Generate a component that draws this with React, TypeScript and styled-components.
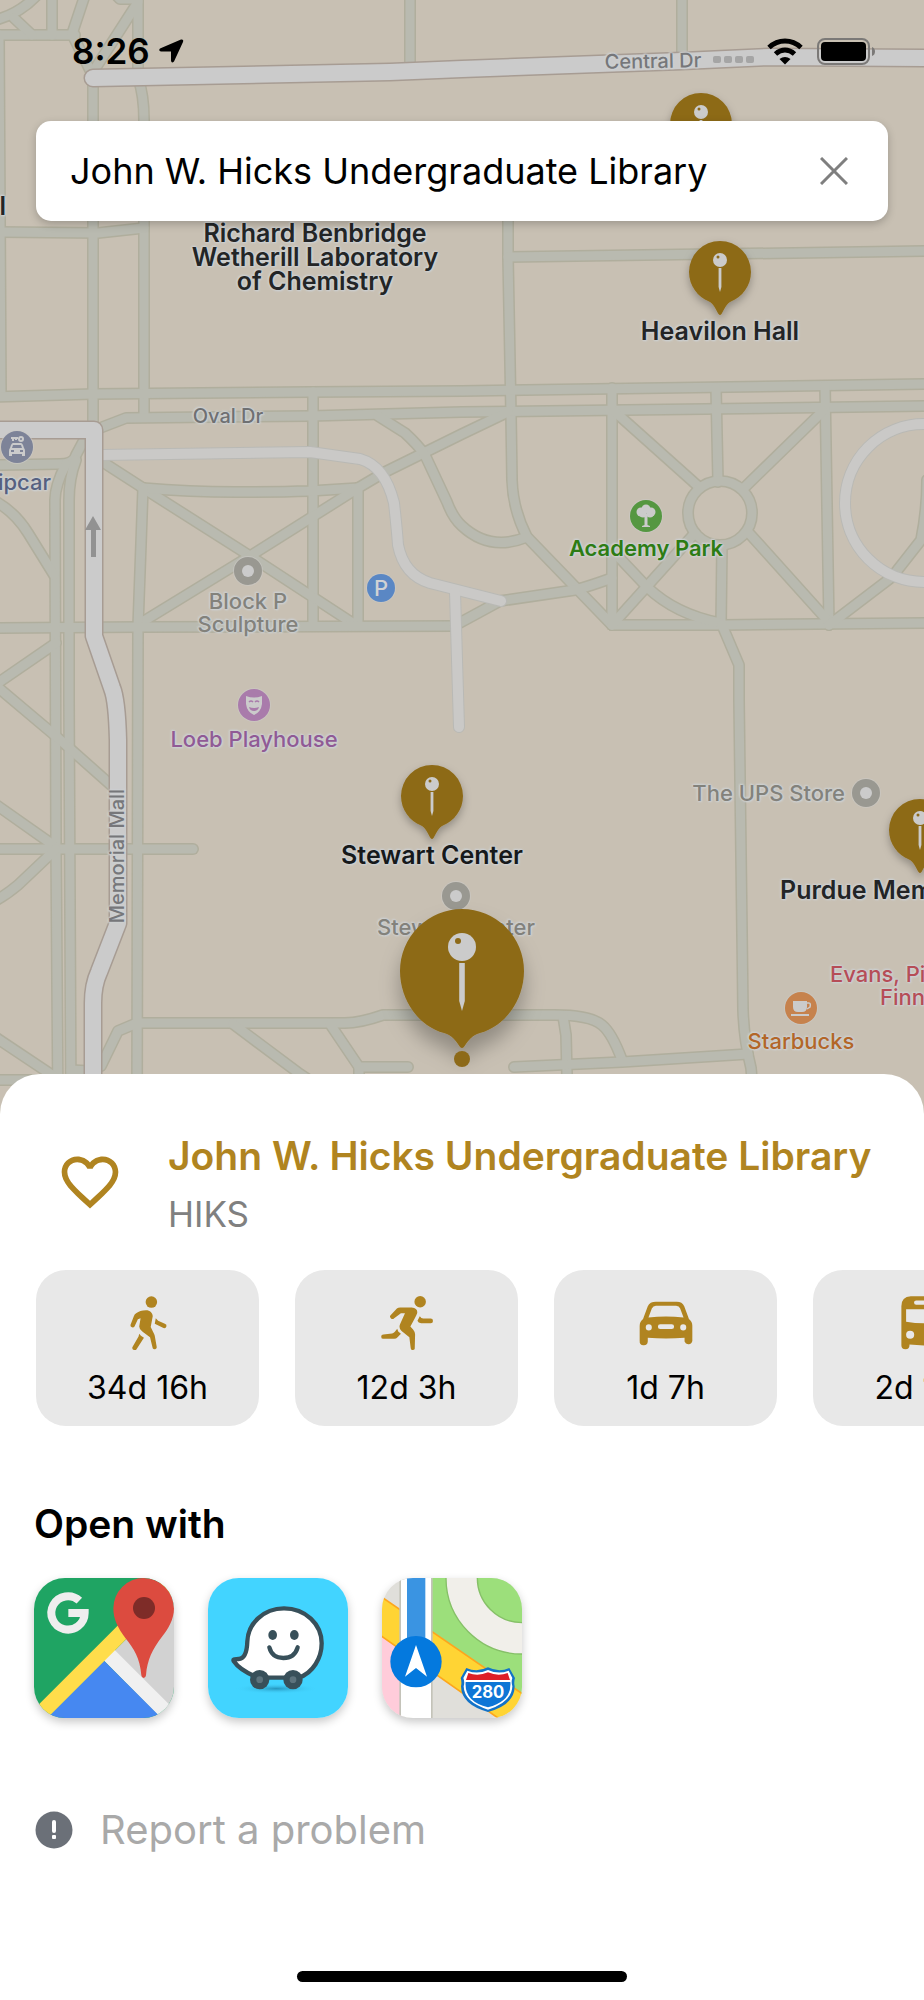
import React, { useState } from "react";
import styled, { createGlobalStyle, css } from "styled-components";
import { MdFavoriteBorder } from "react-icons/md";

const GlobalStyle = createGlobalStyle`
  *, *::before, *::after { box-sizing: border-box; }
  body {
    margin: 0;
    background: #fff;
    font-family: Inter, "Liberation Sans", sans-serif;
    color: #000;
  }
  button { font: inherit; color: inherit; border: 0; padding: 0; background: none; cursor: pointer; }
`;

const MAP_W = 924;
const MAP_H = 1114;
const gold = "#b08420";

const Screen = styled.div`
  position: relative;
  min-height: 100vh;
  display: flex;
  flex-direction: column;
  overflow: hidden;
`;

/* ---------- map ---------- */

const MapCanvas = styled.div`
  position: relative;
  width: 100%;
  aspect-ratio: ${MAP_W} / ${MAP_H};
  overflow: hidden;
  background: #c8c0b3;
`;

const MapDrawing = styled.svg`
  display: block;
  width: 100%;
  height: 100%;
`;

const PinLayer = styled.svg`
  position: absolute;
  inset: 0;
  width: 100%;
  height: 100%;
`;

type Anchor = "center" | "start" | "end";

const anchorShift: Record<Anchor, string> = { center: "-50%", start: "0", end: "-100%" };

const labelKinds = {
  building: css`font-size: 25px; line-height: 24px; font-weight: 600;`,
  park: css`font-size: 22px; line-height: 24px; font-weight: 600;`,
  place: css`font-size: 22px; line-height: 23px; font-weight: 500;`,
  street: css`font-size: 20px; line-height: 24px; font-weight: 500;`,
  glyph: css`font-size: 22px; line-height: 24px; font-weight: 500; text-shadow: none;`,
};

const MapLabel = styled.span<{
  $x: number;
  $y: number;
  $color: string;
  $kind?: keyof typeof labelKinds;
  $anchor?: Anchor;
  $angle?: number;
}>`
  position: absolute;
  left: ${(p) => (p.$x / MAP_W) * 100}%;
  top: ${(p) => (p.$y / MAP_H) * 100}%;
  transform: translate(${(p) => anchorShift[p.$anchor ?? "center"]}, -50%) rotate(${(p) => p.$angle ?? 0}deg);
  color: ${(p) => p.$color};
  white-space: pre;
  text-align: center;
  text-shadow: 0 0 2px #cdd0d1, 0 0 2px #cdd0d1, 1px 1px 2px #cdd0d1, -1px -1px 2px #cdd0d1, 0 0 3px #cdd0d1;
  ${(p) => labelKinds[p.$kind ?? "place"]}
`;

const footpaths = [
  "M-1 35L1 396",
  "M-5 35H75",
  "M-5 20Q20 14 38 -6",
  "M14 18L32 35",
  "M52 -5V35",
  "M85 -5L72 34L93 76",
  "M138 2L93 72",
  "M115 -6L120 -1H138",
  "M138 -5V78Q144 95 144 120V417",
  "M93 72V425",
  "M-5 232L98 233L144 228",
  "M410 -5V66",
  "M682 -5V56",
  "M508 180V257L511 415L512 480Q513 510 527 537L612 625",
  "M508 257L930 251",
  "M-5 397L93 394L310 392L462 391L930 384",
  "M100 428L126 418L310 416L462 412L930 406",
  "M313 392V625",
  "M98 459L143 488L250 556L354 624",
  "M143 488Q190 492 235 492T310 491L358 488",
  "M139 624L250 556L358 488L385 472L462 434L508 412",
  "M358 488V625",
  "M143 488L138 627L137 1112",
  "M-5 628L138 627L454 626",
  "M378 416L405 433Q418 445 425 455L447 502Q453 518 462 526Q490 552 527 537",
  "M454 626L500 601L575 590Q590 586 612 578",
  "M612 388V625",
  "M716 388L718 482",
  "M722 545L721 625",
  "M825 386L829 625",
  "M612 625L722 625L930 623",
  "M614 411L699 487",
  "M823 411L745 487",
  "M695 533L612 625",
  "M748 532L829 622",
  "M612 550L647 587Q675 614 720 623",
  "M829 625L892 577L921 540Q927 510 927 480",
  "M722 625L739 665V700L743 1010Q744 1040 751 1068L755 1114",
  "M-5 465L60 464Q74 464 76 455L84 440",
  "M66 464Q55 485 55 500L56 845L58 1112",
  "M76 460Q69 478 69 500V700L71 1112",
  "M-5 501Q15 512 28 533L54 575",
  "M56 643L-5 685",
  "M-5 685L58 738L112 786",
  "M-5 804L56 847",
  "M-5 849H193",
  "M56 849L18 885Q6 895 -5 901",
  "M-5 1037L58 1079",
  "M71 1070L90 1071",
  "M101 1066L118 1031L137 1023H345Q360 1023 383 1015H555Q590 1015 602 1025Q612 1033 622 1060",
  "M563 1016L566 1035L568 1114",
  "M233 1024L300 1074L330 1094",
  "M330 1024L359 1067H408",
  "M359 1067V1114",
  "M514 1067L622 1062L748 1054",
  "M-5 1080H60",
];

const driveFromMall = "M100 455L310 452L360 459Q385 466 394 503Q397 530 398 545Q404 575 430 583L501 601";

const lanes = [driveFromMall, "M455 592L459 727", "M940 424H924A79 79 0 0 0 924 582H940"];

const streets = [
  "M93 78L390 72L462 69L682 61L770 57L930 58",
  "M-10 430H94V636L112 688Q117 700 118 740V923L99 972Q93 985 93 1003V1120",
];

const Strokes = ({ paths, color, width }: { paths: string[]; color: string; width: number }) => (
  <g fill="none" stroke={color} strokeWidth={width} strokeLinecap="round" strokeLinejoin="round">
    {paths.map((d) => (
      <path key={d} d={d} />
    ))}
  </g>
);

const pinShape = "M-31 0A31 31 0 0 1 31 0C31 14 22 25 11 29.500C6 32 4 38 1.500 42Q0 44 -1.500 42C-4 38 -6 32 -11 29.500C-22 25 -31 14 -31 0Z";
const selectedPinShape = "M-31 0A31 31 0 0 1 31 0C31 15 21 28 9 31C5 32 3 35 1 38Q0 39 -1 38C-3 35 -5 32 -9 31C-21 28 -31 15 -31 0Z";

const Pin = ({ x, y, selected = false }: { x: number; y: number; selected?: boolean }) => (
  <g transform={`translate(${x} ${y}) scale(${selected ? 2 : 1})`}>
    <path
      filter={selected ? "url(#selectedPinShadow)" : "url(#pinShadow)"}
      fill="#8d6a19"
      d={selected ? selectedPinShape : pinShape}
    />
    <circle cy="-12" r="7" fill="#cbcbcb" />
    <circle cx="-2" cy="-15" r="1.500" fill="#8d6a19" />
    <path d="M-1.400 -4H1.400V15L0 20L-1.400 15Z" fill="#cbcbcb" />
  </g>
);

const Poi = ({ x, y, r = 16, color, children }: { x: number; y: number; r?: number; color: string; children?: React.ReactNode }) => (
  <g transform={`translate(${x} ${y})`}>
    <circle r={r + 1} fill="#cbcac6" opacity=".6" />
    <circle r={r} fill={color} />
    {children}
  </g>
);

const Dot = () => <circle r="6" fill="#cbcbcb" />;

const CampusMap = () => (
  <MapCanvas>
    <MapDrawing viewBox={`0 0 ${MAP_W} ${MAP_H}`} aria-hidden="true">
      <Strokes paths={footpaths} color="#b0ae9d" width={12} />
      <circle cx="720" cy="513" r="32" fill="none" stroke="#b0ae9d" strokeWidth="12" />
      <Strokes paths={footpaths} color="#b9bab0" width={9} />
      <circle cx="720" cy="513" r="32" fill="none" stroke="#b9bab0" strokeWidth="9" />
      <Strokes paths={lanes} color="#b9b9b5" width={12} />
      <Strokes paths={lanes} color="#cac9c7" width={10} />
      <Strokes paths={streets} color="#a79c93" width={19} />
      <Strokes paths={streets} color="#cbcbcb" width={16} />

      <path d="M93 516L101 530H96V557H91V530H85Z" fill="#929292" />
      <g fill="#a5a5a5">
        {[713, 724, 735, 746].map((x) => (
          <rect key={x} x={x} y="56" width="8" height="7" rx="2" />
        ))}
      </g>

      <Poi x={17} y={447} color="#7d8398">
        <path
          fill="#cbcbcb"
          fillRule="evenodd"
          d="M-4 -4H4Q5 -4 6 -2L7 1Q8 2 8 4V9H5V7H-5V9H-8V4Q-8 2 -7 1L-6 -2Q-5 -4 -4 -4ZM-4 -2L-5 1H5L4 -2ZM-6 3V5H-3V3ZM3 3V5H6V3Z"
        />
        <path d="M-6 -9H1M-4 -9V-6M-1 -9V-7" stroke="#cbcbcb" strokeWidth="2" />
        <circle cx="4" cy="-8" r="2" fill="none" stroke="#cbcbcb" strokeWidth="2" />
      </Poi>
      <Poi x={248} y={571} r={14} color="#999891"><Dot /></Poi>
      <Poi x={381} y={588} r={14} color="#5a87c4" />
      <Poi x={254} y={705} color="#a97bab">
        <path d="M-8 -9Q0 -6 8 -9V-1Q7 7 0 10Q-7 7 -8 -1Z" fill="#cbcbcb" />
        <path d="M-5 -3Q-3 -5 -1 -3M1 -3Q3 -5 5 -3" fill="none" stroke="#a97bab" strokeWidth="1.500" />
        <path d="M-5 2Q0 4 5 2Q4 6 0 6T-5 2Z" fill="#a97bab" />
      </Poi>
      <Poi x={646} y={516} color="#559741">
        <g fill="#cbcbcb">
          <circle cx="0" cy="-7" r="4.500" />
          <circle cx="-5" cy="-4" r="4.500" />
          <circle cx="5" cy="-4" r="4.500" />
          <circle cx="-3" cy="-2" r="3.500" />
          <circle cx="4" cy="-2" r="3.500" />
          <path d="M-1.500 -2H1.500V9L4 10V11H-4V10L-1.500 9Z" />
        </g>
      </Poi>
      <Poi x={866} y={793} r={14} color="#999891"><Dot /></Poi>
      <Poi x={456} y={896} r={14} color="#999891"><Dot /></Poi>
      <Poi x={801} y={1008} color="#c6824d">
        <path d="M-8 -7H6V-1Q6 4 1 4H-3Q-8 4 -8 -1ZM-10 6H8V8H-10Z" fill="#cbcbcb" />
        <path d="M6 -5H8Q10 -5 9 -1L6 1" fill="none" stroke="#cbcbcb" strokeWidth="1.500" />
      </Poi>
    </MapDrawing>

    <MapLabel $x={6} $y={206} $color="#232526" $kind="building" $anchor="end">Forney Hall</MapLabel>
    <MapLabel $x={315} $y={257} $color="#232526" $kind="building">{"Richard Benbridge\nWetherill Laboratory\nof Chemistry"}</MapLabel>
    <MapLabel $x={720} $y={331} $color="#232526" $kind="building">Heavilon Hall</MapLabel>
    <MapLabel $x={432} $y={855} $color="#16191b" $kind="building">Stewart Center</MapLabel>
    <MapLabel $x={780} $y={890} $color="#232526" $kind="building" $anchor="start">Purdue Memorial Union</MapLabel>
    <MapLabel $x={653} $y={61} $color="#76777a" $kind="street" $angle={-1}>Central Dr</MapLabel>
    <MapLabel $x={228} $y={416} $color="#6f7072" $kind="street">Oval Dr</MapLabel>
    <MapLabel $x={117} $y={856} $color="#76777a" $kind="street" $angle={-90}>Memorial Mall</MapLabel>
    <MapLabel $x={51} $y={482} $color="#566080" $anchor="end">Zipcar</MapLabel>
    <MapLabel $x={248} $y={613} $color="#83827c">{"Block P\nSculpture"}</MapLabel>
    <MapLabel $x={381} $y={588} $color="#d0d2d4" $kind="glyph">P</MapLabel>
    <MapLabel $x={254} $y={739} $color="#905a95">Loeb Playhouse</MapLabel>
    <MapLabel $x={646} $y={548} $color="#2d7c14" $kind="park">Academy Park</MapLabel>
    <MapLabel $x={845} $y={793} $color="#83827c" $anchor="end">The UPS Store</MapLabel>
    <MapLabel $x={456} $y={927} $color="#83827c">Stewart Center</MapLabel>
    <MapLabel $x={830} $y={974} $color="#b64d57" $anchor="start">Evans, Pigatti</MapLabel>
    <MapLabel $x={880} $y={997} $color="#b64d57" $anchor="start">Finney</MapLabel>
    <MapLabel $x={801} $y={1041} $color="#b36628">Starbucks</MapLabel>

    <PinLayer viewBox={`0 0 ${MAP_W} ${MAP_H}`} aria-hidden="true">
      <defs>
        <filter id="pinShadow" x="-50%" y="-50%" width="200%" height="200%">
          <feDropShadow dx="0" dy="4" stdDeviation="4" floodColor="#000" floodOpacity=".28" />
        </filter>
        <filter id="selectedPinShadow" x="-50%" y="-50%" width="200%" height="200%">
          <feDropShadow dx="0" dy="7" stdDeviation="5" floodColor="#000" floodOpacity=".28" />
        </filter>
      </defs>
      <Pin x={701} y={124} />
      <Pin x={720} y={272} />
      <Pin x={432} y={796} />
      <Pin x={920} y={830} />
      <Pin x={462} y={971} selected />
      <circle cx="462" cy="1059" r="8" fill="#8d6a19" />
    </PinLayer>
  </MapCanvas>
);

/* ---------- overlay ---------- */

const Overlay = styled.header`
  position: absolute;
  top: 0;
  left: 0;
  right: 0;
  padding: 31px 36px 0;
`;

const StatusBar = styled.div`
  display: flex;
  align-items: center;
  height: 40px;
  padding: 0 12px 0 36px;
  margin-bottom: 50px;
  gap: 8px;
`;

const Clock = styled.time`
  font-size: 35px;
  line-height: 40px;
  font-weight: 600;
`;

const StatusIcons = styled.div`
  display: flex;
  align-items: center;
  gap: 14px;
  margin-left: auto;
`;

const SearchBar = styled.form`
  display: flex;
  align-items: center;
  height: 100px;
  padding: 0 30px 0 34px;
  border-radius: 15px;
  background: #fff;
  box-shadow: 0 3px 8px rgba(0, 0, 0, 0.22);
`;

const SearchInput = styled.input`
  flex: 1;
  min-width: 0;
  padding: 0;
  border: 0;
  outline: 0;
  background: none;
  color: #000;
  font: 400 36px/48px Inter, "Liberation Sans", sans-serif;
`;

const ClearButton = styled.button`
  display: grid;
  place-items: center;
  width: 48px;
  height: 48px;
`;

/* ---------- sheet ---------- */

const Sheet = styled.main`
  position: relative;
  flex: 1;
  display: flex;
  flex-direction: column;
  margin-top: -40px;
  padding: 54px 0 18px;
  border-radius: 40px 40px 0 0;
  background: #fff;
`;

const PlaceHeader = styled.section`
  display: flex;
  gap: 24px;
  height: 142px;
  padding: 0 36px;
`;

const FavoriteButton = styled.button`
  flex: none;
  display: grid;
  place-items: center;
  width: 108px;
  height: 108px;
  color: ${gold};
`;

const PlaceName = styled.h1`
  margin: 0;
  font-size: 39px;
  line-height: 56px;
  font-weight: 600;
  color: ${gold};
  white-space: nowrap;
`;

const PlaceCode = styled.p`
  margin: 0;
  font-size: 35px;
  line-height: 60px;
  color: #808080;
`;

const TravelModes = styled.section`
  display: flex;
  gap: 36px;
  padding: 0 36px;
  overflow: hidden;
`;

const TravelCard = styled.button`
  flex: none;
  display: flex;
  flex-direction: column;
  align-items: center;
  gap: 18px;
  width: 223px;
  height: 156px;
  padding-top: 26px;
  border-radius: 30px;
  background: #e8e8e8;
  color: ${gold};
`;

const Duration = styled.span`
  font-size: 32px;
  line-height: 40px;
  color: #000;
  white-space: nowrap;
`;

const SectionTitle = styled.h2`
  margin: 72px 0 28px;
  padding: 0 34px;
  font-size: 39px;
  line-height: 52px;
  font-weight: 600;
`;

const AppList = styled.nav`
  display: flex;
  gap: 34px;
  padding: 0 34px;
`;

const AppLink = styled.a`
  display: block;
  width: 140px;
  height: 140px;
  border-radius: 31px;
  overflow: hidden;
  box-shadow: 0 4px 10px rgba(0, 0, 0, 0.22);

  svg { display: block; width: 100%; height: 100%; }
`;

const ReportButton = styled.button`
  display: flex;
  align-items: center;
  align-self: flex-start;
  gap: 27px;
  margin: 84px 0 0 35px;
  font-size: 40px;
  line-height: 56px;
  color: #a9a9a9;
`;

const HomeIndicator = styled.div`
  width: 330px;
  height: 11px;
  margin: auto auto 0;
  border-radius: 6px;
  background: #000;
`;

/* ---------- icons ---------- */

const ModeIcon = ({ children }: { children: React.ReactNode }) => (
  <svg width="54" height="54" viewBox="0 0 160 160" fill="currentColor" fillRule="evenodd" aria-hidden="true">
    {children}
  </svg>
);

const WalkIcon = () => (
  <ModeIcon>
    <circle cx="90" cy="18" r="17" />
    <path d="M46 50C52 46 62 42 74 42C86 42 94 50 94 60L88 92L96 108Q99 113 100 118L106 152A6.500 6.500 0 0 1 94 155L86 122L64 106Q54 99 54 90L58 66L50 69L40 90A6.500 6.500 0 0 1 28 86L38 60Q40 53 46 50Z" />
    <path d="M103 66L110 73L130 82A6.500 6.500 0 0 1 126 95L100 82Z" />
    <path d="M54 112L59 118L68 124L47 156A6.500 6.500 0 0 1 34 151L52 120Z" />
  </ModeIcon>
);

const RunIcon = () => (
  <ModeIcon>
    <circle cx="119" cy="17" r="17" />
    <path d="M50 37Q54 34 60 34H94Q113 36 110 51Q108 58 90 90L98 99Q104 106 104 114L103 153A6 6 0 0 1 91 155L87 122L64 104Q54 95 60 82L74 51H62L42 66A6.500 6.500 0 0 1 32 56Z" />
    <path d="M118 60Q122 67 128 67H150A6.500 6.500 0 0 1 150 81H122Q113 80 111 73Z" />
    <path d="M51 97L54 105L62 112L52 122Q48 127 42 127H10A6.500 6.500 0 0 1 10 114L36 111Q41 110 44 106Z" />
  </ModeIcon>
);

const CarIcon = () => (
  <ModeIcon>
    <path d="M50 17H112Q128 17 134 30L148 68Q158 76 158 88V133A12 12 0 0 1 135 135V124Q80 128 26 124V135A12 12 0 0 1 2 133V88Q2 76 12 68L26 30Q32 17 50 17ZM50 29Q42 29 38 37L28 64Q80 58 132 64L122 37Q119 29 110 29ZM29 84A9 9 0 1 0 29 102A9 9 0 1 0 29 84ZM131 84A9 9 0 1 0 131 102A9 9 0 1 0 131 84ZM63 84A7 7 0 0 0 63 98H97A7 7 0 0 0 97 84Z" />
  </ModeIcon>
);

const BusIcon = () => (
  <ModeIcon>
    <path d="M38 1H122Q150 3 150 30V146A12 12 0 0 1 126 146V144Q80 149 34 144V146A12 12 0 0 1 10 146V30Q10 3 38 1ZM54 13A6 6 0 0 0 54 26H106A6 6 0 0 0 106 13ZM24 39V76Q80 86 136 76V39ZM36 103A12 12 0 1 0 36 127A12 12 0 1 0 36 103ZM124 103A12 12 0 1 0 124 127A12 12 0 1 0 124 103Z" />
  </ModeIcon>
);

const GoogleMapsLogo = () => (
  <svg viewBox="0 0 420 420" aria-hidden="true">
    <rect width="420" height="420" fill="#1fa463" />
    <path d="M230 230L420 40V420Z" fill="#d2d2d2" />
    <path d="M208 246L239 213L420 394V420H380Z" fill="#f0f0f0" />
    <path d="M210 248L382 420H38Z" fill="#4688f1" />
    <path d="M0 394L394 0H460L40 420H0Z" fill="#ffdd4b" />
    <path d="M136 68A50 50 0 1 0 152 105H103" fill="none" stroke="#eee" strokeWidth="24" />
    <path
      d="M238 91A91 91 0 0 1 420 91C420 125 402 153 385 175C355 215 340 245 336 292Q335 300 329 300Q323 300 322 292C318 240 300 213 274 180C252 150 238 125 238 91Z"
      fill="#dc4b3f"
    />
    <circle cx="330" cy="90" r="33" fill="#7e2c28" />
  </svg>
);

const WazeLogo = () => (
  <svg viewBox="0 0 420 420" aria-hidden="true">
    <defs>
      <radialGradient id="wazeShade">
        <stop offset="0" stopColor="#1f86ad" stopOpacity=".8" />
        <stop offset="1" stopColor="#42d4ff" stopOpacity="0" />
      </radialGradient>
    </defs>
    <rect width="420" height="420" fill="#42d4ff" />
    <ellipse cx="205" cy="332" rx="125" ry="16" fill="url(#wazeShade)" />
    <path
      d="M150 299H272C315 285 341 240 341 196C341 138 292 91 228 91C165 91 120 138 118 190C117 222 110 242 92 243C82 244 74 242 77 249C92 272 120 287 150 299Z"
      fill="#fff"
      stroke="#38505a"
      strokeWidth="13"
      strokeLinejoin="round"
    />
    <g fill="#38505a">
      <circle cx="155" cy="305" r="29" />
      <circle cx="255" cy="305" r="29" />
      <ellipse cx="194" cy="171" rx="13" ry="15" />
      <ellipse cx="259" cy="171" rx="13" ry="15" />
    </g>
    <circle cx="155" cy="305" r="10" fill="#5d737d" />
    <circle cx="255" cy="305" r="10" fill="#5d737d" />
    <path d="M184 208Q192 240 226 240Q260 240 269 208" fill="none" stroke="#38505a" strokeWidth="13" strokeLinecap="round" />
  </svg>
);

const AppleMapsLogo = () => (
  <svg viewBox="0 0 420 420" aria-hidden="true">
    <rect width="420" height="420" fill="#e0dfda" />
    <path d="M150 0H420V350L150 160Z" fill="#9cdf7b" />
    <circle cx="420" cy="0" r="181" fill="none" stroke="#86c068" strokeWidth="98" />
    <circle cx="420" cy="0" r="181" fill="none" stroke="#f1efea" strokeWidth="90" />
    <path d="M0 175L60 217V420H0Z" fill="#ffccda" />
    <path d="M-5 54L425 350V474L-5 172Z" fill="#ffd434" stroke="#fda61d" strokeWidth="5" />
    <rect x="52" width="100" height="420" fill="#c4c3b9" />
    <rect x="57" width="90" height="420" fill="#fff" />
    <rect x="75" width="55" height="230" fill="#3a94e2" />
    <circle cx="102" cy="251" r="77" fill="#0479de" />
    <path d="M102 201L135 296L102 270L69 296Z" fill="#fff" />
    <path
      d="M253 270Q285 284 318 268Q350 284 382 270L399 300Q395 312 398 325Q398 380 318 402Q238 380 237 325Q240 312 236 300Z"
      fill="#1273c8"
    />
    <path
      d="M256 278Q287 290 318 276Q349 290 380 278L391 300Q387 312 391 325Q390 372 318 395Q246 372 245 325Q249 312 244 300Z"
      fill="#fff"
    />
    <path d="M259 285Q288 296 318 283Q348 296 377 285L384 306H252Z" fill="#dd1f26" />
    <path d="M251 312H385Q390 370 318 388Q246 370 251 312Z" fill="#0e76d6" />
    <text x="318" y="359" textAnchor="middle" fontFamily="Inter, sans-serif" fontWeight="700" fontSize="50" fill="#fff">
      280
    </text>
  </svg>
);

const modes = [
  { label: "Walk", time: "34d 16h", Icon: WalkIcon },
  { label: "Run", time: "12d 3h", Icon: RunIcon },
  { label: "Drive", time: "1d 7h", Icon: CarIcon },
  { label: "Bus", time: "2d 10h", Icon: BusIcon },
];

const apps = [
  { label: "Google Maps", Logo: GoogleMapsLogo },
  { label: "Waze", Logo: WazeLogo },
  { label: "Apple Maps", Logo: AppleMapsLogo },
];

export default function App() {
  const [query, setQuery] = useState("John W. Hicks Undergraduate Library");

  return (
    <Screen>
      <GlobalStyle />
      <CampusMap />

      <Overlay>
        <StatusBar>
          <Clock>8:26</Clock>
          <svg width="26" height="26" viewBox="0 0 26 26" aria-hidden="true">
            <path d="M2 10.500L23 1.500Q26 1 25 4L16 23.500Q13.500 26 13 22.500V13.500H3Q0 12.500 2 10.500Z" />
          </svg>
          <StatusIcons>
            <svg width="36" height="27" viewBox="0 0 36 27" aria-hidden="true">
              <g fill="none" stroke="#000" strokeWidth="5">
                <path d="M2 9.500Q9 3 18 3T34 9.500" />
                <path d="M8.500 16Q13 12 18 12T27.500 16" />
              </g>
              <path d="M12.500 21Q18 17 23.500 21L18 26.500Z" />
            </svg>
            <svg width="59" height="27" viewBox="0 0 59 27" aria-hidden="true">
              <rect x="1" y="1" width="51" height="25" rx="7" fill="none" stroke="#7b7977" strokeWidth="2" />
              <rect x="4" y="4" width="45" height="19" rx="4" />
              <path d="M55 9Q58 10 58 13.500T55 18Z" fill="#7b7977" />
            </svg>
          </StatusIcons>
        </StatusBar>
        <SearchBar onSubmit={(e) => e.preventDefault()}>
          <SearchInput aria-label="Search buildings" value={query} onChange={(e) => setQuery(e.target.value)} />
          <ClearButton type="button" aria-label="Clear search" onClick={() => setQuery("")}>
            <svg width="28" height="28" viewBox="0 0 28 28" aria-hidden="true">
              <path d="M1 1L27 27M27 1L1 27" stroke="#7f7f7f" strokeWidth="3" />
            </svg>
          </ClearButton>
        </SearchBar>
      </Overlay>

      <Sheet>
        <PlaceHeader>
          <FavoriteButton aria-label="Add to favorites">
            <MdFavoriteBorder size={68} />
          </FavoriteButton>
          <div>
            <PlaceName>John W. Hicks Undergraduate Library</PlaceName>
            <PlaceCode>HIKS</PlaceCode>
          </div>
        </PlaceHeader>

        <TravelModes aria-label="Travel times">
          {modes.map(({ label, time, Icon }) => (
            <TravelCard key={label} aria-label={`${label} ${time}`}>
              <Icon />
              <Duration>{time}</Duration>
            </TravelCard>
          ))}
        </TravelModes>

        <SectionTitle>Open with</SectionTitle>
        <AppList aria-label="Open with">
          {apps.map(({ label, Logo }) => (
            <AppLink key={label} href="#" aria-label={label}>
              <Logo />
            </AppLink>
          ))}
        </AppList>

        <ReportButton>
          <svg width="38" height="38" viewBox="0 0 38 38" aria-hidden="true">
            <circle cx="19" cy="19" r="18.500" fill="#6b7078" />
            <rect x="17" y="9" width="4" height="13" rx="2" fill="#fff" />
            <rect x="17" y="24" width="4" height="4" rx="1" fill="#fff" />
          </svg>
          Report a problem
        </ReportButton>

        <HomeIndicator />
      </Sheet>
    </Screen>
  );
}
